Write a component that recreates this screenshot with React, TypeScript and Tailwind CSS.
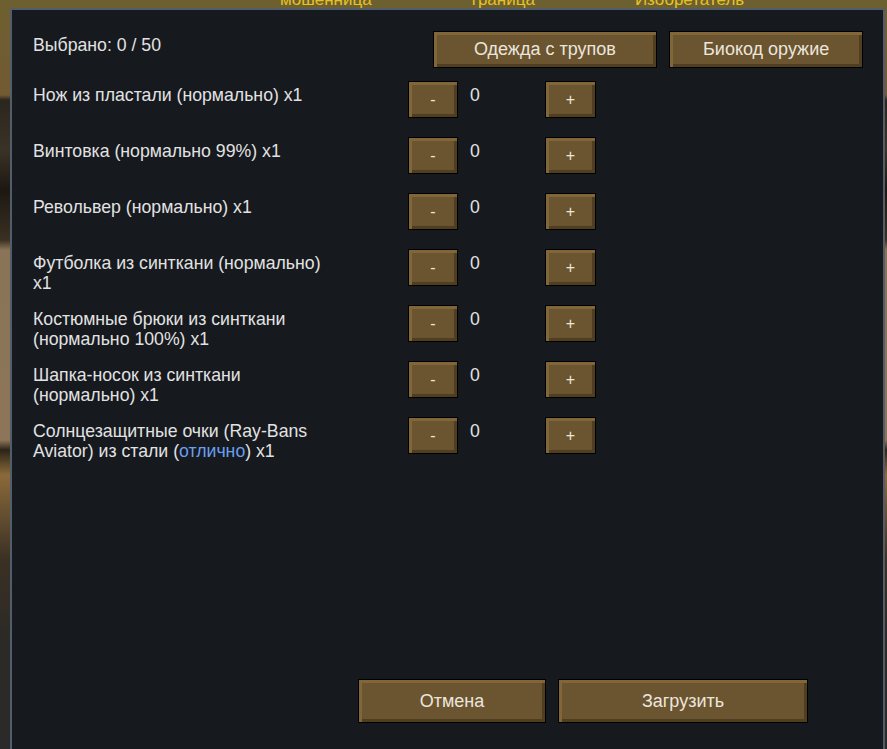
import React from "react"

const items: { label: React.ReactNode }[] = [
  { label: "Нож из пластали (нормально) x1" },
  { label: "Винтовка (нормально 99%) x1" },
  { label: "Револьвер (нормально) x1" },
  { label: "Футболка из синткани (нормально) x1" },
  { label: "Костюмные брюки из синткани (нормально 100%) x1" },
  { label: "Шапка-носок из синткани (нормально) x1" },
  {
    label: (
      <>
        Солнцезащитные очки (Ray-Bans Aviator) из стали (<span className="text-[#6a9ff0]">отлично</span>) x1
      </>
    ),
  },
]

function GameButton({ children, className }: { children: React.ReactNode; className: string }) {
  return (
    <button
      className={
        "flex items-center justify-center border border-black bg-[#6b5430] text-[#ebe6dc] shadow-[inset_3px_3px_0_#806639,inset_-3px_-3px_0_#4f3e1f] " +
        className
      }
    >
      {children}
    </button>
  )
}

export default function App() {
  return (
    <div
      className="h-[749px] w-[887px] overflow-hidden bg-[linear-gradient(180deg,#6d6030_0px,#735a33_95px,#2b261e_100px,#3a3226_150px,#1c1812_190px,#3a3022_240px,#8a7458_250px,#8c7558_440px,#2c2419_450px,#8a6a3a_475px,#3a3024_560px,#2c2a26_640px,#2a2a2a_749px)] font-['Liberation_Sans',Arial,sans-serif]"
    >
      <div className="h-[8px] overflow-hidden pl-[280px] text-[17px] leading-[12px] text-[#e7c320]">
        <div className="-mt-[6px] flex gap-[100px]">
          <span>мошенница</span>
          <span>граница</span>
          <span>Изобретатель</span>
        </div>
      </div>
      <div className="ml-[10px] h-[760px] w-[875px] border-2 border-[#525d6b] bg-[#16191e] pl-[21px] pr-[20px] text-[17.7px] text-[#e2e2e2]">
        <div className="mt-[21px] flex items-center">
          <div className="w-[400px] pb-[9px]">Выбрано: 0 / 50</div>
          <GameButton className="h-[37px] w-[225px] text-[18px]">Одежда с трупов</GameButton>
          <GameButton className="ml-[12px] h-[37px] w-[194px] text-[18px]">Биокод оружие</GameButton>
        </div>
        <div className="mt-[13px] flex flex-col">
          {items.map((it, i) => (
            <div key={i} className="flex h-[56px]">
              <div className="w-[375px]">
                <div className="w-[300px] pt-[4px] leading-[20px]">{it.label}</div>
              </div>
              <GameButton className="h-[37px] w-[50px] text-[16px]">-</GameButton>
              <div className="w-[87px] pl-[12px] pt-[4px] leading-[20px]">0</div>
              <GameButton className="h-[37px] w-[51px] text-[16px]">+</GameButton>
            </div>
          ))}
        </div>
        <div className="mt-[206px] flex pl-[325px]">
          <GameButton className="h-[44px] w-[188px] text-[18px]">Отмена</GameButton>
          <GameButton className="ml-[12px] h-[44px] w-[250px] text-[18px]">Загрузить</GameButton>
        </div>
      </div>
    </div>
  )
}
